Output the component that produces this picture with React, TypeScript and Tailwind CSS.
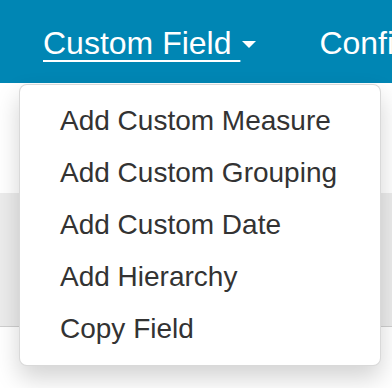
const ITEMS = [
  'Add Custom Measure',
  'Add Custom Grouping',
  'Add Custom Date',
  'Add Hierarchy',
  'Copy Field',
];

export default function App() {
  return (
    <div
      className="relative w-[392px] h-[388px] overflow-hidden bg-white"
      style={{ fontFamily: '"Liberation Sans", Arial, sans-serif' }}
    >
      {/* Top nav */}
      <div className="h-[83px] bg-[#0086b4] flex items-start text-white text-[32px] leading-none whitespace-nowrap">
        <div className="shrink-0 pl-[43px] pt-[27px] flex items-center">
          <span className="underline underline-offset-[6px] decoration-2 whitespace-pre">Custom Field </span>
          <span className="ml-[2px] mt-[2px] w-0 h-0 border-x-[7px] border-x-transparent border-t-[7px] border-t-white" />
        </div>
        <div className="shrink-0 pl-[63px] pt-[27px]">Configure</div>
      </div>

      {/* Page background under the menu */}
      <div className="h-[110px] bg-white" />
      <div className="h-[134px] bg-[#ececec] border-b border-[#cfcfcf]" />

      {/* Dropdown */}
      <div className="absolute left-[19px] top-[84px] w-[362px] py-[10px] bg-white rounded-[8px] border border-black/15 shadow-[0_12px_24px_rgba(0,0,0,0.175)]">
        {ITEMS.map(item => (
          <div key={item} className="px-[40px] h-[52px] flex items-center text-[28px] text-[#333]">
            {item}
          </div>
        ))}
      </div>
    </div>
  );
}
